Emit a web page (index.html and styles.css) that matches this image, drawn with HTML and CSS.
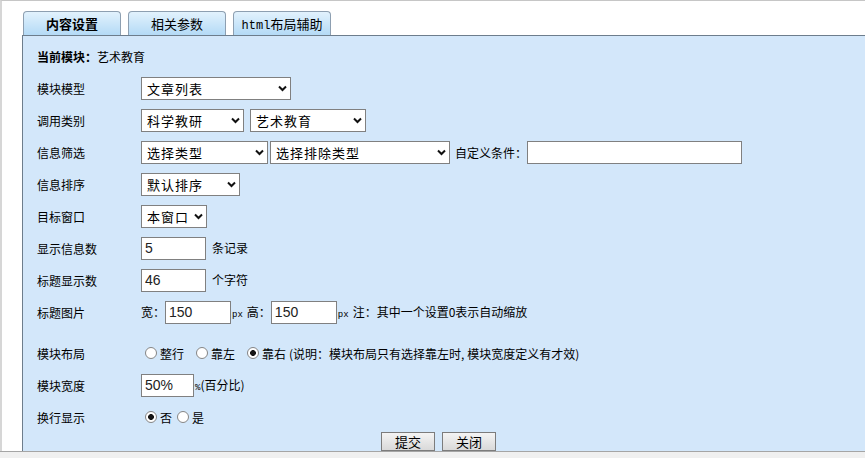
FILE: index.html
```html
<!DOCTYPE html>
<html lang="zh-CN">
<head>
    <meta charset="UTF-8">
    <title>模块设置</title>
    <link rel="stylesheet" href="styles.css">
</head>
<body>
    <div class="page">
        <ul class="tabs">
            <li class="tab active">内容设置</li>
            <li class="tab">相关参数</li>
            <li class="tab"><span class="mono">html</span>布局辅助</li>
        </ul>

        <form class="panel">
            <div class="row"><b>当前模块：</b>艺术教育</div>

            <div class="row">
                <span class="label">模块模型</span>
                <label class="select w150"><select><option>文章列表</option></select><svg viewBox="0 0 9 7"><path d="M1 1.5L4.5 5L8 1.5"/></svg></label>
            </div>

            <div class="row">
                <span class="label">调用类别</span>
                <label class="select w103"><select><option>科学教研</option></select><svg viewBox="0 0 9 7"><path d="M1 1.5L4.5 5L8 1.5"/></svg></label>
                <label class="select w116 ml6"><select><option>艺术教育</option></select><svg viewBox="0 0 9 7"><path d="M1 1.5L4.5 5L8 1.5"/></svg></label>
            </div>

            <div class="row">
                <span class="label">信息筛选</span>
                <label class="select w127"><select><option>选择类型</option></select><svg viewBox="0 0 9 7"><path d="M1 1.5L4.5 5L8 1.5"/></svg></label>
                <label class="select w180 ml2"><select><option>选择排除类型</option></select><svg viewBox="0 0 9 7"><path d="M1 1.5L4.5 5L8 1.5"/></svg></label>
                <span class="ml5">自定义条件：</span>
                <input class="text w215" type="text">
            </div>

            <div class="row">
                <span class="label">信息排序</span>
                <label class="select w99"><select><option>默认排序</option></select><svg viewBox="0 0 9 7"><path d="M1 1.5L4.5 5L8 1.5"/></svg></label>
            </div>

            <div class="row">
                <span class="label">目标窗口</span>
                <label class="select w66"><select><option>本窗口</option></select><svg viewBox="0 0 9 7"><path d="M1 1.5L4.5 5L8 1.5"/></svg></label>
            </div>

            <div class="row">
                <span class="label">显示信息数</span>
                <div class="field">
                    <input class="text w65" type="text" value="5">
                    <span class="ml6">条记录</span>
                </div>
            </div>

            <div class="row">
                <span class="label">标题显示数</span>
                <div class="field">
                    <input class="text w65" type="text" value="46">
                    <span class="ml6">个字符</span>
                </div>
            </div>

            <div class="row">
                <span class="label">标题图片</span>
                <div class="field">
                    <span>宽：</span>
                    <input class="text w66" type="text" value="150">
                    <span class="unit">px</span>
                    <span class="ml4">高：</span>
                    <input class="text w66" type="text" value="150">
                    <span class="unit">px</span>
                    <span class="ml4">注：其中一个设置0表示自动缩放</span>
                </div>
            </div>

            <div class="row gap-top">
                <span class="label">模块布局</span>
                <div class="field radios">
                    <label class="radio"><input type="radio" name="layout">整行</label>
                    <label class="radio"><input type="radio" name="layout">靠左</label>
                    <label class="radio"><input type="radio" name="layout" checked>靠右</label>
                </div>
                <span class="note">(说明：模块布局只有选择靠左时, 模块宽度定义有才效)</span>
            </div>

            <div class="row">
                <span class="label">模块宽度</span>
                <div class="field">
                    <input class="text w53" type="text" value="50%">
                    <span class="unit">%</span><span>(百分比)</span>
                </div>
            </div>

            <div class="row">
                <span class="label">换行显示</span>
                <div class="field radios tight">
                    <label class="radio"><input type="radio" name="wrap" checked>否</label>
                    <label class="radio"><input type="radio" name="wrap">是</label>
                </div>
            </div>

            <div class="actions">
                <button type="button" class="btn">提交</button>
                <button type="button" class="btn">关闭</button>
            </div>
        </form>
    </div>
    <div class="footer"></div>
</body>
</html>
```

FILE: styles.css
```css
/* 基础 */
body {
    margin: 0;
    background: #fff;
    color: #000;
    font: 12px "Noto Sans CJK SC", sans-serif;
}

.page {
    border-top: 1px solid #c6c6c6;
    border-left: 2px solid #d6d6d6;
    padding: 10px 0 0 20px;
}

/* 选项卡 */
.tabs {
    list-style: none;
    margin: 0 0 0 1px;
    padding: 0;
    display: flex;
    gap: 7px;
}

.tab {
    width: 96px;
    height: 23px;
    border: 1px solid #8d9fb1;
    border-bottom: 0;
    border-radius: 4px 4px 0 0;
    background: linear-gradient(#e2f2fd, #b4daf6);
    text-align: center;
    line-height: 23px;
    font-size: 13px;
}

.tab.active {
    font-weight: bold;
}

.mono {
    font-family: "Liberation Mono", monospace;
    font-size: 12px;
}

/* 表单面板 */
.panel {
    margin: 0;
    border-top: 1px solid #6d7d8c;
    border-left: 1px solid #6d7d8c;
    background: #d3e7fa;
    padding: 4px 0 0 14px;
}

.row {
    display: flex;
    align-items: center;
    height: 32px;
}

.row.gap-top {
    margin-top: 9px;
}

.label {
    width: 104px;
    flex: none;
}

.field {
    display: flex;
    align-items: baseline;
}

/* 下拉框 */
.select {
    position: relative;
    display: inline-block;
    height: 23px;
    box-sizing: border-box;
}

.select select {
    appearance: none;
    -webkit-appearance: none;
    width: 100%;
    height: 100%;
    margin: 0;
    padding: 0 0 0 5px;
    border: 1px solid #808080;
    border-radius: 0;
    background: #fff;
    color: #000;
    font: 13px "Noto Sans CJK SC", sans-serif;
    letter-spacing: 1px;
}

.select svg {
    position: absolute;
    right: 4px;
    top: 8px;
    width: 9px;
    height: 7px;
    pointer-events: none;
}

.select svg path {
    fill: none;
    stroke: #111;
    stroke-width: 2;
}

/* 文本框 */
.text {
    height: 23px;
    box-sizing: border-box;
    margin: 0;
    padding: 0 3px;
    border: 1px solid #808080;
    border-radius: 0;
    background: #fff;
    color: #222;
    font: 14px "Liberation Sans", Arial, sans-serif;
}

.w53 { width: 53px; }
.w65 { width: 65px; }
.w66 { width: 66px; }
.w99 { width: 99px; }
.w103 { width: 103px; }
.w116 { width: 116px; }
.w127 { width: 127px; }
.w150 { width: 150px; }
.w180 { width: 180px; }
.w215 { width: 215px; }

.ml2 { margin-left: 2px; }
.ml4 { margin-left: 4px; }
.ml5 { margin-left: 5px; }
.ml6 { margin-left: 6px; }

.unit {
    margin-left: 1px;
    font: 9px "Liberation Mono", monospace;
}

/* 单选 */
.radios {
    align-items: center;
    gap: 12px;
    padding-left: 4px;
}

.radios.tight {
    gap: 5px;
}

.radio {
    display: flex;
    align-items: center;
}

.radio input {
    appearance: none;
    -webkit-appearance: none;
    width: 12px;
    height: 12px;
    margin: 0 3px 0 0;
    border: 1px solid #858585;
    border-radius: 50%;
    background: #fff;
}

.radio input:checked {
    background: radial-gradient(circle, #151515 0 2.6px, #fff 3.2px);
}

.note {
    margin-left: 3px;
}

/* 按钮 */
.actions {
    display: flex;
    gap: 7px;
    height: 19px;
    margin-top: -1px;
    padding-left: 344px;
}

.btn {
    width: 54px;
    height: 19px;
    margin: 0;
    padding: 0;
    border: 1px solid #7c7c7c;
    border-radius: 0;
    background: linear-gradient(#f4f4f4, #d9d9d9);
    color: #000;
    font: 13px "Noto Sans CJK SC", sans-serif;
    line-height: 17px;
}

.footer {
    height: 6px;
    border-top: 1px solid #a5a5a5;
    background: #f0f0f0;
}
```
